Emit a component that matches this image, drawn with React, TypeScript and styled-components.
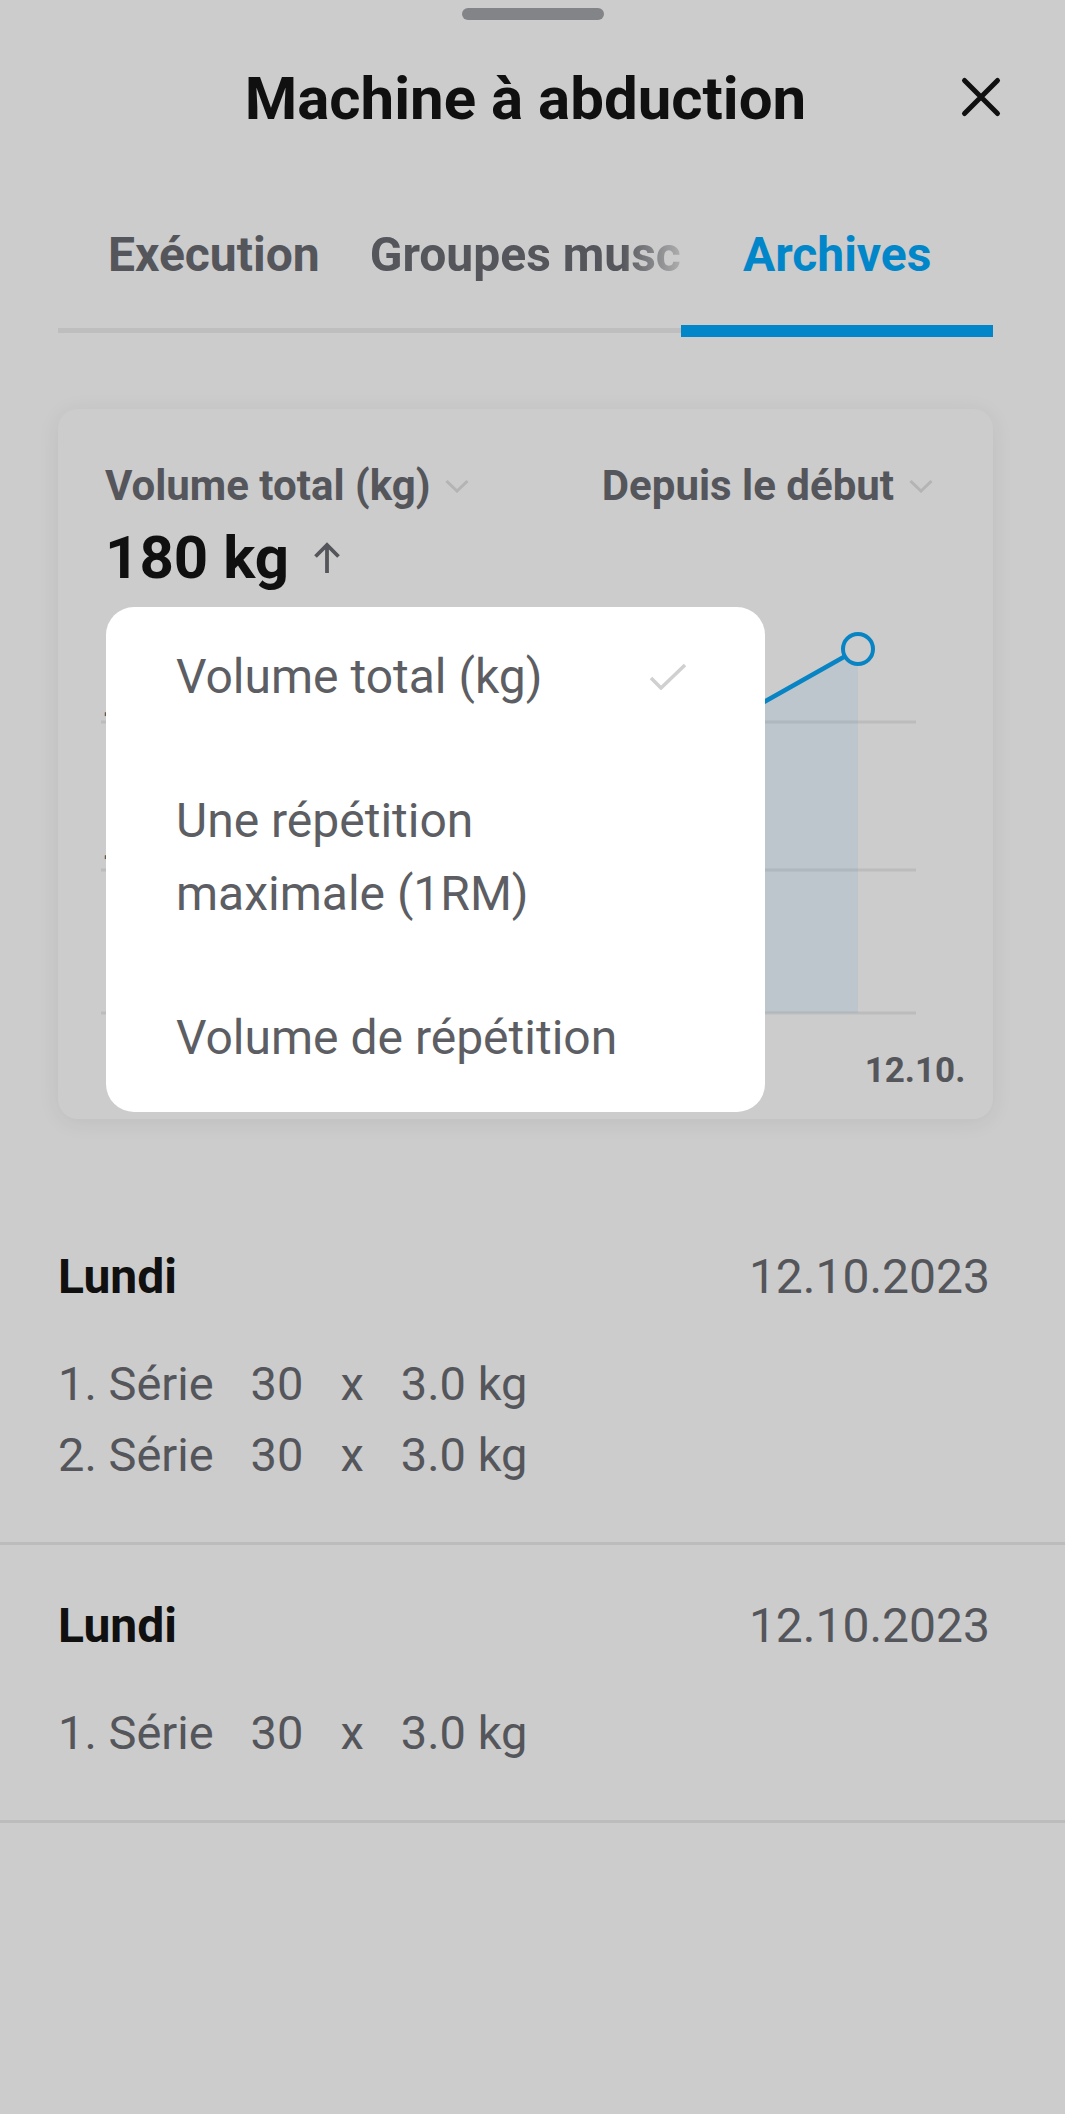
import React from "react";
import styled, { createGlobalStyle } from "styled-components";

const GlobalStyle = createGlobalStyle`
  html, body {
    margin: 0;
    padding: 0;
    background: #fff;
  }
  body {
    font-family: Roboto, "Noto Sans", "Liberation Sans", sans-serif;
  }
  * {
    box-sizing: border-box;
  }
`;

const Sheet = styled.div`
  width: 1065px;
  min-height: 2114px;
  background: #fff;
  padding-top: 8px;
`;

const Handle = styled.div`
  width: 142px;
  height: 12px;
  margin: 0 auto;
  border-radius: 6px;
  background: #a4a5a9;
`;

const Content = styled.div`
  padding: 0 72px 0 58px;
`;

const Header = styled.header`
  display: grid;
  grid-template-columns: 1fr auto 1fr;
  align-items: center;
  height: 70px;
  margin-top: 44px;
`;

const Title = styled.h1`
  grid-column: 2;
  margin: 0;
  font-size: 60px;
  line-height: 70px;
  font-weight: 700;
  color: #151515;
  white-space: nowrap;
`;

const CloseButton = styled.button`
  grid-column: 3;
  justify-self: end;
  display: flex;
  padding: 0;
  margin: -4px -12px 0 0;
  border: 0;
  background: none;
  cursor: pointer;
`;

const Tabs = styled.nav`
  margin-top: 93px;
`;

const TabList = styled.div`
  display: grid;
  grid-template-columns: repeat(3, 1fr);
`;

const Tab = styled.div<{ $active?: boolean; $fade?: boolean }>`
  padding-bottom: 45px;
  font-size: 48px;
  line-height: 56px;
  font-weight: 700;
  text-align: center;
  white-space: nowrap;
  overflow: hidden;
  color: ${({ $active }) => ($active ? "#00a8fc" : "#6a6c72")};
  ${({ $fade }) =>
    $fade &&
    `
    -webkit-mask-image: linear-gradient(to right, #000 calc(100% - 60px), rgba(0,0,0,0.25) 100%);
    mask-image: linear-gradient(to right, #000 calc(100% - 60px), rgba(0,0,0,0.25) 100%);
  `}
`;

const Track = styled.div`
  position: relative;
  height: 5px;
  background: #eeeeee;
`;

const Indicator = styled.div<{ $index: number }>`
  position: absolute;
  top: -3px;
  left: ${({ $index }) => `calc(${$index * 100}% / 3)`};
  width: calc(100% / 3);
  height: 12px;
  background: #00a8fc;
`;

const Card = styled.section`
  position: relative;
  margin-top: 76px;
  padding: 52px 0 20px;
  border-radius: 20px;
  background: #fff;
  box-shadow: 0 3px 22px rgba(0, 0, 0, 0.07);
`;

const PickerRow = styled.div`
  display: flex;
  justify-content: space-between;
  align-items: center;
  height: 50px;
  padding: 0 60px 0 47px;
`;

const Picker = styled.div`
  display: flex;
  align-items: center;
  gap: 15px;
  font-size: 42px;
  line-height: 50px;
  font-weight: 700;
  color: #6a6c72;
`;

const ValueRow = styled.div`
  display: flex;
  align-items: center;
  gap: 22px;
  height: 70px;
  margin-top: 12px;
  padding-left: 47px;
`;

const Value = styled.span`
  font-size: 60px;
  line-height: 70px;
  font-weight: 700;
  color: #151515;
`;

const Chart = styled.svg`
  display: block;
  width: 100%;
  height: 506px;
`;

const Menu = styled.ul`
  position: absolute;
  z-index: 20;
  top: 198px;
  left: 48px;
  width: 659px;
  margin: 0;
  padding: 0;
  list-style: none;
  border-radius: 28px;
  background: #fff;
`;

const MenuItem = styled.li`
  display: flex;
  align-items: center;
  justify-content: space-between;
  gap: 24px;
  padding: 33px 78px 38px 70px;
  font-size: 48px;
  line-height: 73px;
  color: #5c5e63;
`;

const CheckSlot = styled.span`
  display: flex;
  flex: 0 0 38px;
  justify-content: center;
`;

const Sessions = styled.div`
  margin-top: 77px;
`;

const Session = styled.article`
  padding: 53px 75px 52px 58px;
  border-bottom: 3px solid #ebebeb;
`;

const SessionHead = styled.div`
  display: flex;
  justify-content: space-between;
  font-size: 48px;
  line-height: 56px;
`;

const Day = styled.span`
  font-weight: 700;
  color: #151515;
`;

const SessionDate = styled.span`
  color: #6a6c72;
`;

const Sets = styled.div`
  margin-top: 43px;
`;

const SetRow = styled.div`
  display: flex;
  gap: 37px;
  font-size: 47px;
  line-height: 71px;
  color: #6a6c72;
`;

const Scrim = styled.div`
  position: fixed;
  inset: 0;
  z-index: 10;
  background: rgba(0, 0, 0, 0.2);
`;

const Chevron = () => (
  <svg width="24" height="14" viewBox="0 0 24 14">
    <polyline points="1.5,2 12,12 22.5,2" fill="none" stroke="#e1e1e1" strokeWidth="3" />
  </svg>
);

const ArrowUp = () => (
  <svg width="32" height="32" viewBox="0 0 32 32">
    <path d="M16 31V3M4.5 14.5L16 3l11.5 11.5" fill="none" stroke="#6a6c72" strokeWidth="3.8" />
  </svg>
);

const Check = () => (
  <svg width="38" height="27" viewBox="0 0 38 27">
    <polyline points="2,15 12,25 36,2" fill="none" stroke="#d0d0d0" strokeWidth="3.5" />
  </svg>
);

const CloseIcon = () => (
  <svg width="48" height="48" viewBox="0 0 48 48">
    <path d="M7.5 7.5l33 33M40.5 7.5l-33 33" stroke="#151515" strokeWidth="5" strokeLinecap="round" />
  </svg>
);

const points: [number, number][] = [
  [113, 366],
  [463, 246],
  [800, 56],
];
const baseY = 420;
const gridY = [129, 277, 420];

function VolumeChart() {
  const line = points.map(([x, y]) => `${x},${y}`).join(" ");
  const area = `${points[0][0]},${baseY} ${line} ${points[points.length - 1][0]},${baseY}`;
  const [lx, ly] = points[points.length - 1];
  return (
    <Chart viewBox="0 0 935 506">
      {gridY.map((y) => (
        <line key={y} x1="43" x2="858" y1={y} y2={y} stroke="#ececec" strokeWidth="3" />
      ))}
      <text x="44" y="140" fontSize="34" fontWeight="700" fill="#6a6c72" fontFamily="Roboto, sans-serif">
        150
      </text>
      <text x="44" y="283" fontSize="34" fontWeight="700" fill="#6a6c72" fontFamily="Roboto, sans-serif">
        100
      </text>
      <polygon points={area} fill="rgba(10,168,255,0.08)" />
      <polyline points={line} fill="none" stroke="#0aa6f5" strokeWidth="4.5" />
      <circle cx={lx} cy={ly} r="15" fill="#fff" stroke="#0aa6f5" strokeWidth="4" />
      <text
        x="857"
        y="489"
        textAnchor="middle"
        fontSize="35"
        fontWeight="700"
        fill="#6a6c72"
        fontFamily="Roboto, sans-serif"
      >
        12.10.
      </text>
    </Chart>
  );
}

const metrics = ["Volume total (kg)", "Une répétition maximale (1RM)", "Volume de répétition"];

const sessions = [
  { day: "Lundi", date: "12.10.2023", sets: 2 },
  { day: "Lundi", date: "12.10.2023", sets: 1 },
];

export default function App() {
  return (
    <>
      <GlobalStyle />
      <Sheet>
        <Handle />
        <Content>
          <Header>
            <Title>Machine à abduction</Title>
            <CloseButton aria-label="Fermer">
              <CloseIcon />
            </CloseButton>
          </Header>

          <Tabs>
            <TabList>
              <Tab>Exécution</Tab>
              <Tab $fade>Groupes musculaires</Tab>
              <Tab $active>Archives</Tab>
            </TabList>
            <Track>
              <Indicator $index={2} />
            </Track>
          </Tabs>

          <Card>
            <PickerRow>
              <Picker>
                Volume total (kg)
                <Chevron />
              </Picker>
              <Picker>
                Depuis le début
                <Chevron />
              </Picker>
            </PickerRow>
            <ValueRow>
              <Value>180 kg</Value>
              <ArrowUp />
            </ValueRow>
            <VolumeChart />

            <Menu>
              {metrics.map((m, i) => (
                <MenuItem key={m}>
                  <span>{m}</span>
                  <CheckSlot>{i === 0 && <Check />}</CheckSlot>
                </MenuItem>
              ))}
            </Menu>
          </Card>
        </Content>

        <Sessions>
          {sessions.map((s, i) => (
            <Session key={i}>
              <SessionHead>
                <Day>{s.day}</Day>
                <SessionDate>{s.date}</SessionDate>
              </SessionHead>
              <Sets>
                {Array.from({ length: s.sets }, (_, n) => (
                  <SetRow key={n}>
                    <span>{n + 1}. Série</span>
                    <span>30</span>
                    <span>x</span>
                    <span>3.0 kg</span>
                  </SetRow>
                ))}
              </Sets>
            </Session>
          ))}
        </Sessions>
      </Sheet>
      <Scrim />
    </>
  );
}
